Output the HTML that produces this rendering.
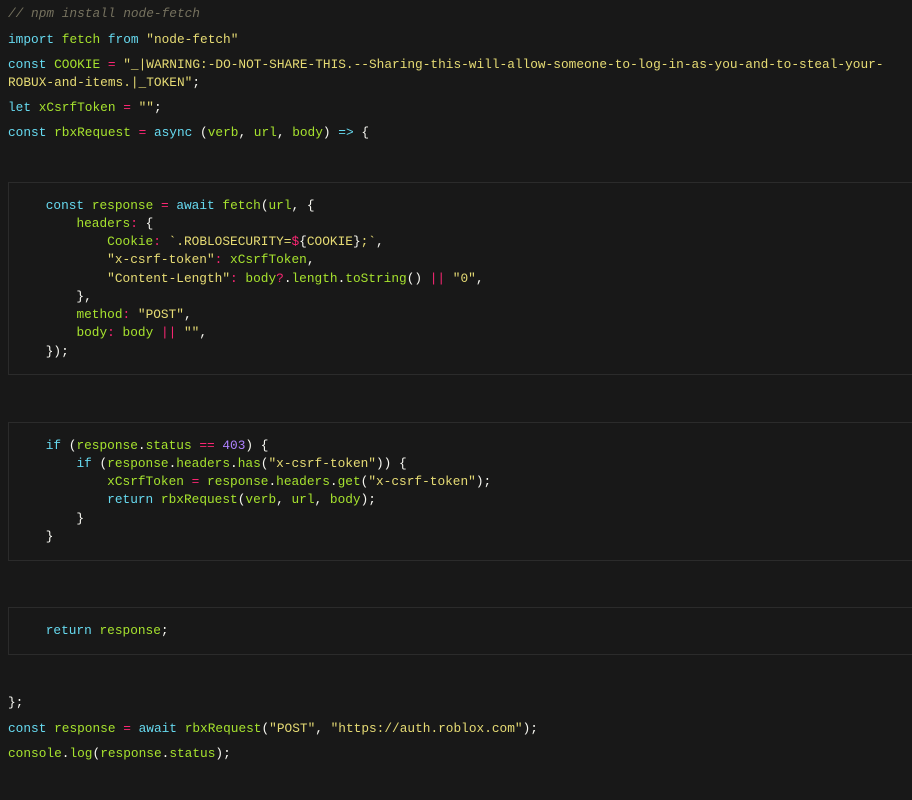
<!DOCTYPE html>
<html><head><style>
html,body{margin:0;padding:0;background:#181818;width:912px;height:800px;overflow:hidden}
.l{position:absolute;left:8px;height:18px;line-height:18px;font-family:"Liberation Mono",monospace;font-size:12.8px;white-space:pre;color:#f8f8f2}
.b{left:15px}
.box{position:absolute;left:8px;width:920px;border:1px solid #2b2b2b;background:#181818}
.k{color:#66d9ef}.g{color:#a6e22e}.s{color:#e6db74}.o{color:#f92672}.n{color:#ae81ff}.c{color:#75715e;font-style:italic}
</style></head><body>
<div class="box" style="top:182px;height:191px"></div>
<div class="box" style="top:422px;height:137px"></div>
<div class="box" style="top:607px;height:46px"></div>

<div class="l c" style="top:5px">// npm install node-fetch</div>
<div class="l" style="top:31px"><span class="k">import</span> <span class="g">fetch</span> <span class="k">from</span> <span class="s">"node-fetch"</span></div>
<div class="l" style="top:56px"><span class="k">const</span> <span class="g">COOKIE</span> <span class="o">=</span> <span class="s">"_|WARNING:-DO-NOT-SHARE-THIS.--Sharing-this-will-allow-someone-to-log-in-as-you-and-to-steal-your-</span></div>
<div class="l" style="top:74px"><span class="s">ROBUX-and-items.|_TOKEN"</span>;</div>
<div class="l" style="top:99px"><span class="k">let</span> <span class="g">xCsrfToken</span> <span class="o">=</span> <span class="s">""</span>;</div>
<div class="l" style="top:124px"><span class="k">const</span> <span class="g">rbxRequest</span> <span class="o">=</span> <span class="k">async</span> (<span class="g">verb</span>, <span class="g">url</span>, <span class="g">body</span>) <span class="k">=&gt;</span> {</div>

<div class="l b" style="top:197px">    <span class="k">const</span> <span class="g">response</span> <span class="o">=</span> <span class="k">await</span> <span class="g">fetch</span>(<span class="g">url</span>, {</div>
<div class="l b" style="top:215px">        <span class="g">headers</span><span class="o">:</span> {</div>
<div class="l b" style="top:233px">            <span class="g">Cookie</span><span class="o">:</span> <span class="s">`.ROBLOSECURITY=</span><span class="o">$</span>{<span class="s">COOKIE</span>}<span class="s">;`</span>,</div>
<div class="l b" style="top:251px">            <span class="s">"x-csrf-token"</span><span class="o">:</span> <span class="g">xCsrfToken</span>,</div>
<div class="l b" style="top:270px">            <span class="s">"Content-Length"</span><span class="o">:</span> <span class="g">body</span><span class="o">?</span>.<span class="g">length</span>.<span class="g">toString</span>() <span class="o">||</span> <span class="s">"0"</span>,</div>
<div class="l b" style="top:288px">        },</div>
<div class="l b" style="top:306px">        <span class="g">method</span><span class="o">:</span> <span class="s">"POST"</span>,</div>
<div class="l b" style="top:324px">        <span class="g">body</span><span class="o">:</span> <span class="g">body</span> <span class="o">||</span> <span class="s">""</span>,</div>
<div class="l b" style="top:343px">    });</div>

<div class="l b" style="top:437px">    <span class="k">if</span> (<span class="g">response</span>.<span class="g">status</span> <span class="o">==</span> <span class="n">403</span>) {</div>
<div class="l b" style="top:455px">        <span class="k">if</span> (<span class="g">response</span>.<span class="g">headers</span>.<span class="g">has</span>(<span class="s">"x-csrf-token"</span>)) {</div>
<div class="l b" style="top:473px">            <span class="g">xCsrfToken</span> <span class="o">=</span> <span class="g">response</span>.<span class="g">headers</span>.<span class="g">get</span>(<span class="s">"x-csrf-token"</span>);</div>
<div class="l b" style="top:491px">            <span class="k">return</span> <span class="g">rbxRequest</span>(<span class="g">verb</span>, <span class="g">url</span>, <span class="g">body</span>);</div>
<div class="l b" style="top:510px">        }</div>
<div class="l b" style="top:528px">    }</div>

<div class="l b" style="top:622px">    <span class="k">return</span> <span class="g">response</span>;</div>

<div class="l" style="top:694px">};</div>
<div class="l" style="top:720px"><span class="k">const</span> <span class="g">response</span> <span class="o">=</span> <span class="k">await</span> <span class="g">rbxRequest</span>(<span class="s">"POST"</span>, <span class="s">"https://auth.roblox.com"</span>);</div>
<div class="l" style="top:745px"><span class="g">console</span>.<span class="g">log</span>(<span class="g">response</span>.<span class="g">status</span>);</div>
</body></html>
